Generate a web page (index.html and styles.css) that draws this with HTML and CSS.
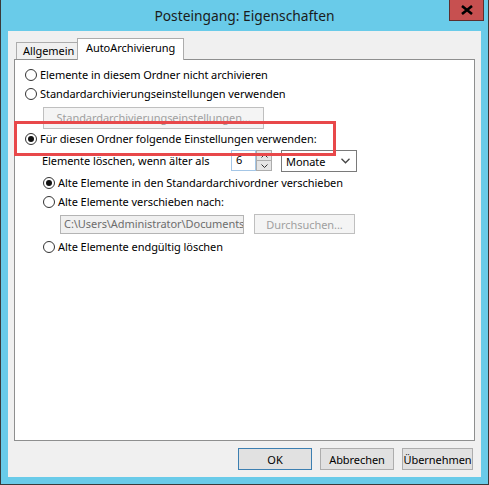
FILE: index.html
```html
<!DOCTYPE html>
<html lang="de">
<head>
<meta charset="utf-8">
<title>Posteingang: Eigenschaften</title>
<link rel="stylesheet" href="styles.css">
</head>
<body>
<div class="window">
  <div class="titlebar">
    <span class="title">Posteingang: Eigenschaften</span>
    <div class="close">
      <svg width="12" height="10" viewBox="0 0 12 10"><path d="M1 1 L11 9 M11 1 L1 9" stroke="#000" stroke-width="2.6" fill="none"/></svg>
    </div>
  </div>
  <div class="client">
    <div class="tabs">
      <div class="tab">Allgemein</div>
      <div class="tab active">AutoArchivierung</div>
    </div>
    <div class="panel">
      <div class="highlight"></div>
      <div class="radio r1"><span class="circle"></span><span>Elemente in diesem Ordner nicht archivieren</span></div>
      <div class="radio r2"><span class="circle"></span><span>Standardarchivierungseinstellungen verwenden</span></div>
      <div class="btn disabled std">Standardarchivierungseinstellungen...</div>
      <div class="radio r3"><span class="circle checked"></span><span>Für diesen Ordner folgende Einstellungen verwenden:</span></div>
      <div class="agerow">
        <span class="agelabel">Elemente löschen, wenn älter als</span>
        <span class="spininput">6</span>
        <span class="spin">
          <span class="spinbtn up"><svg width="7" height="4" viewBox="0 0 7 4"><path d="M0.5 3.5 L3.5 0.5 L6.5 3.5" stroke="#333" fill="none"/></svg></span>
          <span class="spinbtn down"><svg width="7" height="4" viewBox="0 0 7 4"><path d="M0.5 0.5 L3.5 3.5 L6.5 0.5" stroke="#333" fill="none"/></svg></span>
        </span>
        <span class="select">Monate<svg width="9" height="6" viewBox="0 0 9 6"><path d="M0.5 0.8 L4.5 4.8 L8.5 0.8" stroke="#444" stroke-width="1.3" fill="none"/></svg></span>
      </div>
      <div class="radio r4"><span class="circle checked"></span><span>Alte Elemente in den Standardarchivordner verschieben</span></div>
      <div class="radio r5"><span class="circle"></span><span>Alte Elemente verschieben nach:</span></div>
      <div class="pathrow">
        <span class="pathbox">C:\Users\Administrator\Documents</span>
        <span class="btn disabled browse">Durchsuchen...</span>
      </div>
      <div class="radio r6"><span class="circle"></span><span>Alte Elemente endgültig löschen</span></div>
    </div>
    <div class="buttons">
      <div class="btn default">OK</div>
      <div class="btn">Abbrechen</div>
      <div class="btn apply">Übernehmen</div>
    </div>
  </div>
</div>
</body>
</html>
```
FILE: styles.css
```css
* { box-sizing: border-box; }
html, body { margin: 0; padding: 0; }
body {
  width: 489px;
  height: 485px;
  font-family: "Noto Sans", "DejaVu Sans", sans-serif;
  font-size: 11px;
  letter-spacing: -0.06px;
  color: #000;
  overflow: hidden;
}
.window {
  width: 489px;
  height: 485px;
  background: #69cbe9;
  border: 1px solid #3a3a3a;
  border-top: none;
}
.titlebar {
  position: relative;
  height: 31px;
  display: flex;
  align-items: center;
  justify-content: center;
}
.title {
  font-size: 13.8px;
  letter-spacing: 0;
  color: #1b1b1b;
  margin-top: -1px;
}
.close {
  position: absolute;
  top: 0;
  right: 4px;
  width: 35px;
  height: 21px;
  background: #c75050;
  border: 1px solid #5b2f2f;
  border-top: none;
  display: flex;
  align-items: center;
  justify-content: center;
}
.client {
  margin: 0 7px;
  height: 446px;
  background: #f0f0f0;
  padding: 7px 6px 0 6px;
}
.tabs {
  display: flex;
  align-items: flex-end;
  height: 21px;
  padding-left: 2px;
  position: relative;
  z-index: 2;
}
.tab {
  height: 17px;
  padding: 0 0 0 6px;
  width: 61px;
  background: #f0f0f0;
  border: 1px solid #acacac;
  border-right: none;
  border-bottom: none;
  line-height: 16px;
  white-space: nowrap;
}
.tab.active {
  height: 22px;
  width: 107px;
  margin-bottom: -1px;
  background: #fff;
  border-right: 1px solid #acacac;
  padding-left: 8px;
  line-height: 18px;
}
.panel {
  position: relative;
  height: 382px;
  background: #fff;
  border: 1px solid #8e8f8f;
  padding: 6px 0 0 10px;
}
.radio {
  display: flex;
  align-items: center;
  height: 17px;
  gap: 3px;
  white-space: nowrap;
}
.circle {
  width: 12px;
  height: 12px;
  border: 1px solid #333;
  border-radius: 50%;
  background: #fff;
  display: flex;
  align-items: center;
  justify-content: center;
  flex: none;
}
.circle.checked::after {
  content: "";
  width: 6px;
  height: 6px;
  border-radius: 50%;
  background: #111;
}
.r2 { margin-top: 2px; }
.btn {
  height: 22px;
  border: 1px solid #adadad;
  background: #e1e1e1;
  display: flex;
  align-items: center;
  justify-content: center;
  white-space: nowrap;
}
.btn.disabled {
  background: #f4f4f4;
  border-color: #bfbfbf;
  color: #a0a0a0;
}
.std {
  margin: 5px 0 0 18px;
  width: 221px;
  align-items: flex-start;
  padding-top: 2px;
}
.r3 { margin-top: 1px; }
.agerow {
  display: flex;
  align-items: flex-start;
  margin: 3px 0 0 17px;
  height: 22px;
}
.agelabel {
  width: 189px;
  line-height: 21px;
  white-space: nowrap;
}
.spininput {
  width: 25px;
  height: 21px;
  border: 1px solid #a4c6e6;
  padding-left: 4px;
  line-height: 17px;
}
.spin {
  display: flex;
  flex-direction: column;
  width: 16px;
  height: 21px;
}
.spinbtn {
  flex: 1;
  background: #e5e5e5;
  border: 1px solid #acacac;
  display: flex;
  align-items: center;
  justify-content: center;
}
.spinbtn.down { border-top: none; }
.select {
  margin-left: 9px;
  width: 76px;
  height: 22px;
  border: 1px solid #7a7a7a;
  background: #fff;
  display: flex;
  align-items: center;
  justify-content: space-between;
  padding: 0 6px 0 4px;
}
.r4 { margin: 2px 0 0 18px; }
.r5 { margin: 2px 0 0 18px; }
.pathrow {
  display: flex;
  align-items: flex-start;
  margin: 4px 0 0 35px;
  height: 20px;
}
.pathbox {
  margin-top: 1px;
  width: 184px;
  height: 19px;
  border: 1px solid #b4b4b4;
  background: #f0f0f0;
  color: #6d6d6d;
  padding-left: 3px;
  line-height: 16px;
  white-space: nowrap;
  overflow: hidden;
}
.browse {
  margin-left: 10px;
  width: 101px;
  height: 20px;
}
.r6 { margin: 4px 0 0 18px; }
.highlight {
  position: absolute;
  left: -1px;
  top: 61px;
  width: 322px;
  height: 35px;
  border: 3px solid #e8484a;
  pointer-events: none;
  z-index: 3;
}
.buttons {
  display: flex;
  justify-content: flex-end;
  gap: 8px;
  margin-top: 7px;
  padding-right: 2px;
}
.buttons .btn { width: 74px; }
.buttons .btn.default { border-color: #3c7fb1; }
.buttons .btn.apply { width: 71px; }
```
